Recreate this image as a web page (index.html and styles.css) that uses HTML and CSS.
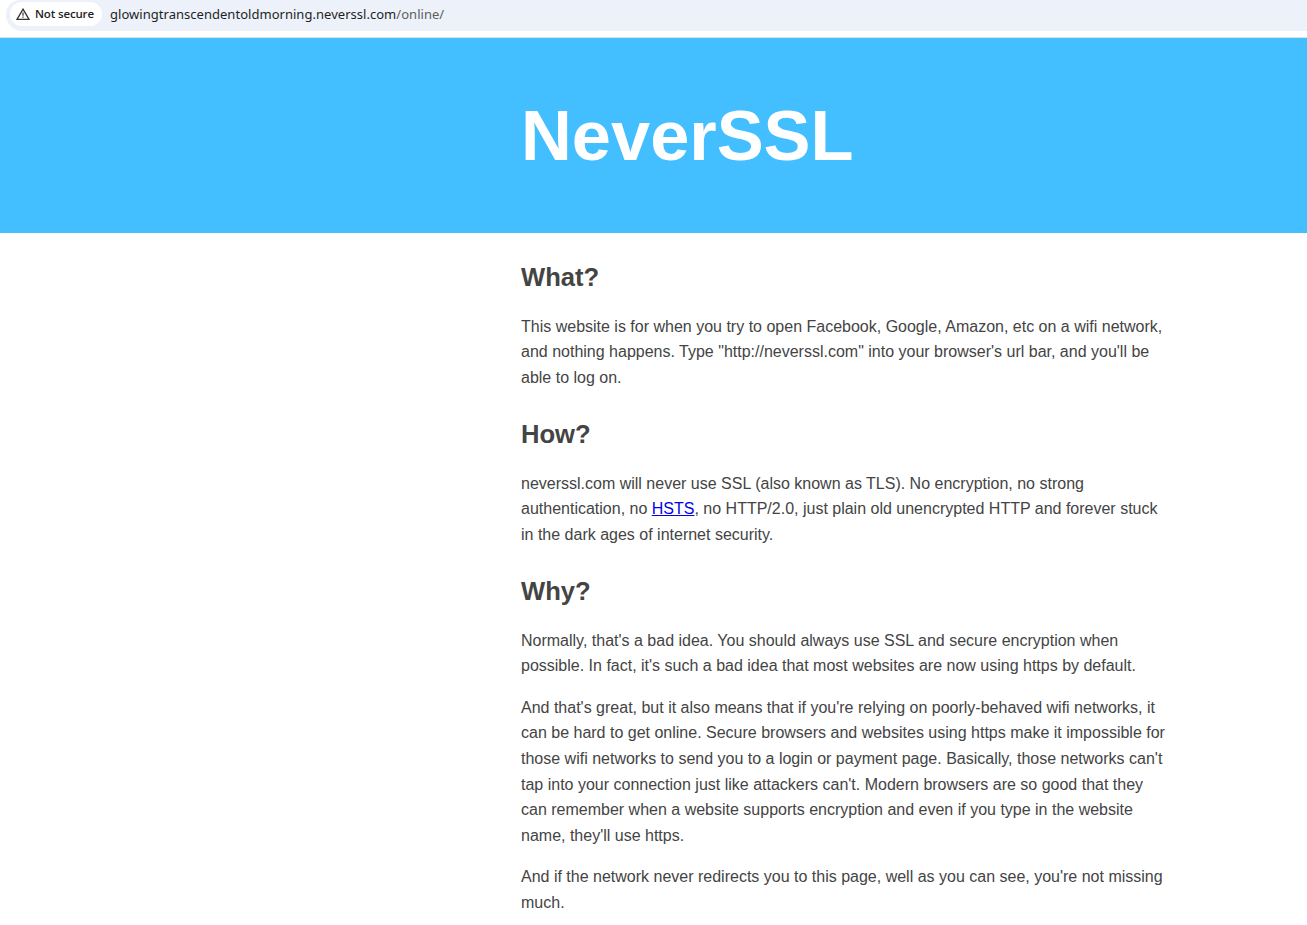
FILE: index.html
```html
<!DOCTYPE html>
<html lang="en">
<head>
<meta charset="utf-8">
<title>NeverSSL</title>
<link rel="stylesheet" href="styles.css">
</head>
<body>
<div class="toolbar">
  <div class="address">
    <div class="chip">
      <svg class="warn" viewBox="0 0 14 12" width="14" height="12"><path d="M7 1.2 13 11.3H1Z" fill="none" stroke="#333" stroke-width="1.3" stroke-linejoin="miter"/><path d="M7 4.6V7.8M7 8.6V9.8" stroke="#333" stroke-width="1.2"/></svg>
      <span>Not secure</span>
    </div>
    <div class="url">glowingtranscendentoldmorning.neverssl.com<span class="path">/online/</span></div>
  </div>
</div>
<header class="header"><div class="container"><h1>NeverSSL</h1></div></header>
<main class="content"><div class="container">
  <h2>What?</h2>
  <p>This website is for when you try to open Facebook, Google, Amazon, etc on a wifi network, and nothing happens. Type "http://neverssl.com" into your browser's url bar, and you'll be able to log on.</p>
  <h2>How?</h2>
  <p>neverssl.com will never use SSL (also known as TLS). No encryption, no strong authentication, no <a href="#">HSTS</a>, no HTTP/2.0, just plain old unencrypted HTTP and forever stuck in the dark ages of internet security.</p>
  <h2>Why?</h2>
  <p>Normally, that's a bad idea. You should always use SSL and secure encryption when possible. In fact, it's such a bad idea that most websites are now using https by default.</p>
  <p>And that's great, but it also means that if you're relying on poorly-behaved wifi networks, it can be hard to get online. Secure browsers and websites using https make it impossible for those wifi networks to send you to a login or payment page. Basically, those networks can't tap into your connection just like attackers can't. Modern browsers are so good that they can remember when a website supports encryption and even if you type in the website name, they'll use https.</p>
  <p>And if the network never redirects you to this page, well as you can see, you're not missing much.</p>
</div></main>
</body>
</html>
```
FILE: styles.css
```css
body { margin: 0; background: #fff; color: #444; font: 16px/1.6 "Liberation Sans", Arial, sans-serif; height: 925px; overflow: hidden; }
.toolbar { box-sizing: border-box; height: 38px; border-bottom: 1px solid #d5e3ea; overflow: hidden; }
.address { display: flex; align-items: center; box-sizing: border-box; height: 31px; margin-left: 6px; padding: 0 0 3px 4px; background: #edf1fa; border-radius: 14px 0 0 16px; }
.chip { display: flex; align-items: center; gap: 5px; box-sizing: border-box; width: 92px; height: 24px; padding-left: 6px; border-radius: 12px; background: #fff; color: #1f1f1f; font: 600 11.5px/24px "Open Sans", sans-serif; letter-spacing: -0.15px; white-space: nowrap; }
.warn { flex: none; }
.url { margin-left: 8px; color: #1f1f1f; font: 13px/20px "Noto Sans", sans-serif; letter-spacing: 0.03px; white-space: nowrap; }
.path { color: #5e5e5e; }
.header { height: 195px; background: #43bfff; overflow: hidden; }
.container { width: 650px; margin-left: 521px; }
h1 { margin: 42px 0 0; color: #fff; font-size: 70.4px; line-height: 112px; }
h2 { margin: 0; font-size: 25.6px; line-height: 42px; }
.content { padding-top: 22.8px; }
p { margin: 16px 0; }
p + h2 { margin-top: 22.1px; }
```
